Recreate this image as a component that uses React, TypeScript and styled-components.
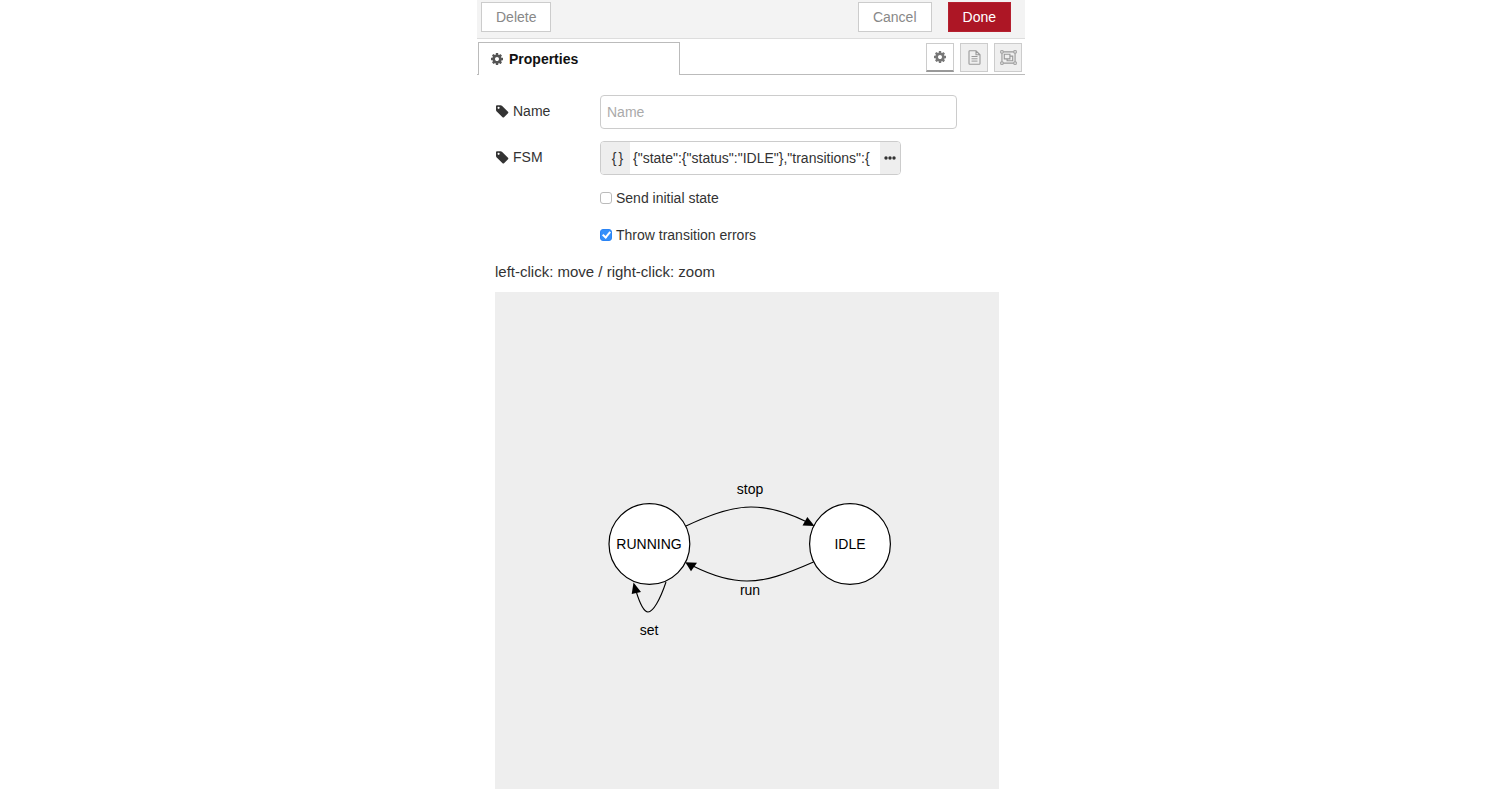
import React, { useState } from "react";
import styled, { createGlobalStyle } from "styled-components";

const GlobalStyle = createGlobalStyle`
  *, *::before, *::after { box-sizing: border-box; }
  body {
    margin: 0;
    background: #fff;
    color: #333;
    font-family: "Liberation Sans", Arial, sans-serif;
    font-size: 14px;
    line-height: 20px;
  }
  button, input { font: inherit; color: inherit; }
`;

const Page = styled.div`
  padding-left: 2px;
`;

const Tray = styled.main`
  width: 100%;
  max-width: 548px;
  margin: 0 auto;
`;

const Toolbar = styled.header`
  display: flex;
  align-items: center;
  gap: 16px;
  padding: 2px 14px 6px 4px;
  background: #f3f3f3;
  border-bottom: 1px solid #ddd;
`;

const ToolbarButton = styled.button<{ $primary?: boolean; $first?: boolean }>`
  height: 30px;
  padding: 0 14px;
  border: 1px solid ${(p) => (p.$primary ? "#b5202f" : "#ccc")};
  background: ${(p) => (p.$primary ? "#ad1625" : "#fff")};
  color: ${(p) => (p.$primary ? "#fff" : "#888")};
  margin-right: ${(p) => (p.$first ? "auto" : "0")};
  cursor: pointer;
`;

const TabBar = styled.nav`
  display: flex;
  align-items: flex-end;
  justify-content: space-between;
  padding: 3px 3px 0 1px;
  border-bottom: 1px solid #bbb;
`;

const Tab = styled.button`
  display: flex;
  align-items: center;
  gap: 6px;
  width: 202px;
  height: 33px;
  margin-bottom: -1px;
  padding: 0 12px;
  border: 1px solid #bbb;
  border-bottom: 0;
  background: #fff;
  color: #111;
  font-weight: bold;
  svg { color: #555; }
`;

const TabActions = styled.div`
  display: flex;
  gap: 6px;
  padding-bottom: 2px;
`;

const IconButton = styled.button<{ $active?: boolean }>`
  display: flex;
  align-items: center;
  justify-content: center;
  width: 28px;
  height: 29px;
  padding: 0;
  border: 1px solid #ccc;
  border-bottom: ${(p) => (p.$active ? "2px solid #999" : "1px solid #ccc")};
  background: ${(p) => (p.$active ? "#fff" : "#efefef")};
  color: ${(p) => (p.$active ? "#777" : "#999")};
`;

const Form = styled.form`
  padding: 20px 26px 12px 18px;
`;

const Field = styled.div`
  display: grid;
  grid-template-columns: 105px 1fr;
  align-items: center;
  margin-bottom: 12px;
`;

const FieldLabel = styled.label`
  display: flex;
  align-items: center;
  gap: 4px;
  padding: 0 0 2px 1px;
`;

const TextInput = styled.input`
  width: 100%;
  max-width: 357px;
  height: 34px;
  padding: 0 6px;
  border: 1px solid #ccc;
  border-radius: 4px;
  background: #fff;
  &::placeholder { color: #aaa; opacity: 1; }
`;

const TypedInput = styled.div`
  display: flex;
  width: 100%;
  max-width: 301px;
  height: 34px;
  border: 1px solid #ccc;
  border-radius: 4px;
  overflow: hidden;
`;

const TypedButton = styled.button<{ $wide?: boolean }>`
  display: flex;
  align-items: center;
  justify-content: center;
  gap: 2px;
  flex: none;
  width: ${(p) => (p.$wide ? "29px" : "20px")};
  padding: ${(p) => (p.$wide ? "0 0 0 4px" : "0")};
  border: 0;
  background: #eee;
`;

const TypedValue = styled.input`
  flex: 1;
  min-width: 0;
  margin: 0 2px 0 3px;
  padding: 0;
  border: 0;
  background: #fff;
`;

const CheckRow = styled.label`
  display: flex;
  align-items: center;
  gap: 4px;
  width: fit-content;
  margin: 0 0 17px 105px;
`;

const CheckBox = styled.input`
  display: grid;
  place-items: center;
  appearance: none;
  width: 12px;
  height: 12px;
  margin: 0;
  border: 1px solid #bbb;
  border-radius: 3px;
  background: #fff;
  &:checked { border-color: #2a84f5; background: #3490fa; }
  &:checked::after {
    content: "";
    width: 5px;
    height: 8px;
    margin-bottom: 2px;
    border: solid #fff;
    border-width: 0 2px 2px 0;
    transform: rotate(40deg);
  }
`;

const Checks = styled.div`
  padding-top: 1px;
`;

const Hint = styled.p`
  margin: 0 0 10px;
  font-size: 15px;
`;

const Canvas = styled.svg`
  display: block;
  width: 100%;
  height: auto;
  background: #eee;
  font-size: 14px;
  text-anchor: middle;
`;

const Gear = ({ size = 12 }: { size?: number }) => (
  <svg width={size} height={size} viewBox="0 -128 1536 1536" fill="currentColor" fillRule="evenodd" aria-hidden="true">
    <path d="M1024 640q0 106-75 181t-181 75-181-75-75-181 75-181 181-75 181 75 75 181zM1536 531v222q0 12-8 23t-20 13l-185 28q-19 54-39 91 35 50 107 138 10 12 10 25t-9 23q-27 37-99 108t-94 71q-12 0-26-9l-138-108q-44 23-91 38-16 136-29 186-7 28-36 28h-222q-14 0-24.500-8.500t-11.500-21.500l-28-184q-49-16-90-37l-141 107q-10 9-25 9-14 0-25-11-126-114-165-168-7-10-7-23 0-12 8-23 15-21 51-66.500t54-70.500q-27-50-41-99l-183-27q-13-2-21-12.500t-8-23.500v-222q0-12 8-23t19-13l186-28q14-46 39-92-40-57-107-138-10-12-10-24 0-10 9-23 26-36 98.500-107.500t94.500-71.500q13 0 26 10l138 107q44-23 91-38 16-136 29-186 7-28 36-28h222q14 0 24.500 8.500t11.500 21.500l28 184q49 16 90 37l142-107q9-9 24-9 13 0 25 10 129 119 165 170 7 8 7 22 0 12-8 23-15 21-51 66.500t-54 70.500q26 50 41 98l183 28q13 2 21 12.500t8 23.500z" />
  </svg>
);

const Tag = () => (
  <svg width="13" height="13" viewBox="0 128 1600 1536" fill="currentColor" fillRule="evenodd" aria-hidden="true">
    <path d="M448 448q0-53-37.500-90.500t-90.500-37.500-90.500 37.500-37.500 90.500 37.500 90.500 90.500 37.500 90.500-37.500 37.500-90.500zM1515 1024q0 53-37 90l-491 492q-39 37-91 37-53 0-90-37l-715-716q-38-37-64.500-101t-26.500-117v-416q0-52 38-90t90-38h416q53 0 117 26.500t102 64.500l715 714q37 39 37 91z" />
  </svg>
);

const FileText = () => (
  <svg width="13" height="15" viewBox="0 0 13 15" fill="none" stroke="currentColor" aria-hidden="true">
    <path d="M1 1.500Q1 .8 1.700 .8H8L12 4.800V13.400Q12 14.200 11.300 14.200H1.700Q1 14.200 1 13.400ZM8 .8V4.800H12" strokeWidth="1.100" />
    <path d="M3.500 6.500H9.500M3.500 8.800H9.500M3.500 11.100H9.500" />
  </svg>
);

const ObjectGroup = () => (
  <svg width="17" height="15" viewBox="0 0 18 16" fill="none" stroke="currentColor" aria-hidden="true">
    <path d="M3.500 2H14.500M3.500 14H14.500M2 3.500V12.500M16 3.500V12.500" strokeWidth="1.200" />
    <path d="M.7 .7H3.300V3.300H.7ZM14.700 .7H17.300V3.300H14.700ZM.7 12.700H3.300V15.300H.7ZM14.700 12.700H17.300V15.300H14.700Z" />
    <path d="M4.500 4.500H10.500V9.500H4.500ZM10.500 6.500H13.500V11.500H7.500V9.500" strokeWidth="1.200" />
  </svg>
);

const Dots = () => (
  <svg width="12" height="4" viewBox="0 0 12 4" fill="#333" aria-hidden="true">
    <circle cx="2" cy="2" r="1.700" />
    <circle cx="6" cy="2" r="1.700" />
    <circle cx="10" cy="2" r="1.700" />
  </svg>
);

const StateGraph = () => (
  <Canvas viewBox="0 0 504 497" role="img" aria-label="State machine graph">
    <g fill="#fff" stroke="#000" strokeWidth="1.200">
      <circle cx="154.400" cy="252" r="40.400" />
      <circle cx="355" cy="252" r="40.400" />
    </g>
    <g fill="none" stroke="#000" strokeWidth="1.100">
      <path d="M191 234C214 223 236 215 256 215C275 215 294 221 312 230" />
      <path d="M318.500 270C289 283 271 289 252 289C233 289 216 283 198 274" />
      <path d="M171 290C165 308 158 320 153 320C149 320 145 312 141 299" />
    </g>
    <g fill="#000">
      <path d="M319.500 234L312.300 225L307.500 233.500Z" />
      <path d="M190.300 270.200L202 270.700L196 279.200Z" />
      <path d="M138.500 290.500L146 300L136.700 302Z" />
      <text x="154" y="257">RUNNING</text>
      <text x="355" y="257">IDLE</text>
      <text x="255" y="202">stop</text>
      <text x="255" y="303">run</text>
      <text x="154" y="343">set</text>
    </g>
  </Canvas>
);

export default function App() {
  const [name, setName] = useState("");
  const [fsm, setFsm] = useState('{"state":{"status":"IDLE"},"transitions":{');

  return (
    <Page>
      <GlobalStyle />
      <Tray>
        <Toolbar>
          <ToolbarButton type="button" $first>Delete</ToolbarButton>
          <ToolbarButton type="button">Cancel</ToolbarButton>
          <ToolbarButton type="button" $primary>Done</ToolbarButton>
        </Toolbar>
        <TabBar>
          <Tab type="button"><Gear />Properties</Tab>
          <TabActions>
            <IconButton type="button" $active aria-label="Properties"><Gear /></IconButton>
            <IconButton type="button" aria-label="Description"><FileText /></IconButton>
            <IconButton type="button" aria-label="Appearance"><ObjectGroup /></IconButton>
          </TabActions>
        </TabBar>
        <Form onSubmit={(e) => e.preventDefault()}>
          <Field>
            <FieldLabel htmlFor="name"><Tag />Name</FieldLabel>
            <TextInput id="name" placeholder="Name" value={name} onChange={(e) => setName(e.target.value)} />
          </Field>
          <Field>
            <FieldLabel htmlFor="fsm"><Tag />FSM</FieldLabel>
            <TypedInput>
              <TypedButton type="button" $wide aria-label="JSON type"><span>{"{"}</span><span>{"}"}</span></TypedButton>
              <TypedValue id="fsm" value={fsm} onChange={(e) => setFsm(e.target.value)} />
              <TypedButton type="button" aria-label="Edit value"><Dots /></TypedButton>
            </TypedInput>
          </Field>
          <Checks>
            <CheckRow><CheckBox type="checkbox" />Send initial state</CheckRow>
            <CheckRow><CheckBox type="checkbox" defaultChecked />Throw transition errors</CheckRow>
          </Checks>
          <Hint>left-click: move / right-click: zoom</Hint>
          <StateGraph />
        </Form>
      </Tray>
    </Page>
  );
}
